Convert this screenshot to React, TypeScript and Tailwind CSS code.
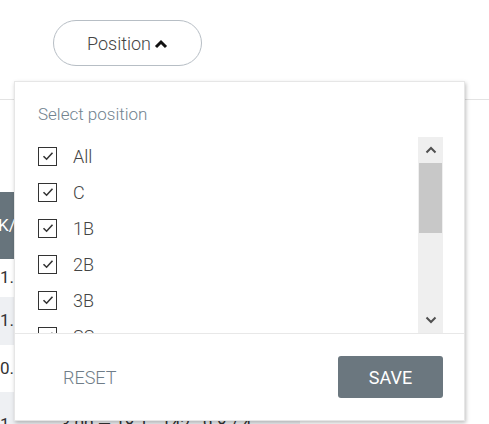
import React from 'react';

const positions = ['All', 'C', '1B', '2B', '3B', 'SS', 'LF', 'CF', 'RF', 'DH', 'P'];

function CheckBox() {
  return (
    <span className="w-[19px] h-[19px] border-[1.5px] border-[#333] flex items-center justify-center shrink-0">
      <svg width="14" height="14" viewBox="0 0 14 14" fill="none">
        <path d="M2.5 7.2 L5.6 10.2 L11.5 3.8" stroke="#333" strokeWidth="1.6" />
      </svg>
    </span>
  );
}

export default function App() {
  return (
    <div className="relative w-[489px] h-[424px] overflow-hidden bg-white font-['Roboto',sans-serif]">
      {/* Trigger */}
      <div className="pt-[20px] pl-[53px]">
        <button className="h-[46px] w-[149px] rounded-full border border-[#b7bec5] flex items-center justify-center gap-[3px] text-[18px] font-light text-[#444]">
          <span>Position</span>
          <svg width="14" height="10" viewBox="0 0 14 10" className="mt-[1px]">
            <path d="M2 8 L7 3 L12 8" stroke="#111" strokeWidth="3" fill="none" />
          </svg>
        </button>
      </div>

      {/* Table behind */}
      <div className="mt-[33px] border-t border-[#e3e3e3] h-[93px]" />
      <div className="w-[300px]">
        <div className="h-[67px] bg-[#67747c] flex items-center text-white text-[17px] overflow-hidden">
          <span className="-ml-[2px]">K/</span>
        </div>
        <div className="h-[38px] flex items-center text-[17px] text-[#333]">1.</div>
        <div className="h-[48px] flex items-center text-[17px] text-[#333] bg-[#eef0f3]">1.</div>
        <div className="h-[47px] flex items-center text-[17px] text-[#333]">0.</div>
        <div className="h-[48px] flex items-start pt-[20px] text-[17px] text-[#333] bg-[#eef0f3]">1.&nbsp;&nbsp;&nbsp;&nbsp;&nbsp;&nbsp;&nbsp;&nbsp;&nbsp;&nbsp;&nbsp;3.00 — 18.1 . 142 . 9.8 / 4</div>
      </div>

      {/* Popup */}
      <div className="absolute left-[14px] top-[81px] w-[451px] h-[340px] bg-white border border-[#e6e6e6] shadow-[1px_2px_4px_rgba(0,0,0,0.25)] flex flex-col">
        <div className="h-[55px] pl-[23px] pt-[20px] text-[17px] font-light text-[#72838f]">Select position</div>
        <div className="h-[196px] flex">
          <div className="flex-1 overflow-hidden pt-[1px] pl-[23px]">
            {positions.map((p) => (
              <div key={p} className="h-[36px] flex items-center gap-[16px] text-[18px] font-light text-[#444]">
                <CheckBox />
                <span>{p}</span>
              </div>
            ))}
          </div>
          <div className="w-[25px] mr-[21px] bg-[#efefef] flex flex-col">
            <div className="h-[26px] flex items-center justify-center">
              <svg width="12" height="8" viewBox="0 0 12 8">
                <path d="M1.5 6.5 L6 2 L10.5 6.5" stroke="#505050" strokeWidth="2" fill="none" />
              </svg>
            </div>
            <div className="h-[70px] mx-[1px] bg-[#c8c8c8]" />
            <div className="flex-1" />
            <div className="h-[26px] flex items-center justify-center">
              <svg width="12" height="8" viewBox="0 0 12 8">
                <path d="M1.5 1.5 L6 6 L10.5 1.5" stroke="#505050" strokeWidth="2" fill="none" />
              </svg>
            </div>
          </div>
        </div>
        <div className="flex-1 border-t border-[#e8e8e8] flex items-center justify-between pl-[48px] pr-[21px]">
          <button className="text-[18px] font-light text-[#6f7d88] uppercase">Reset</button>
          <button className="w-[105px] h-[42px] rounded-[3px] bg-[#6b777f] text-white text-[18px] uppercase">Save</button>
        </div>
      </div>
    </div>
  );
}
